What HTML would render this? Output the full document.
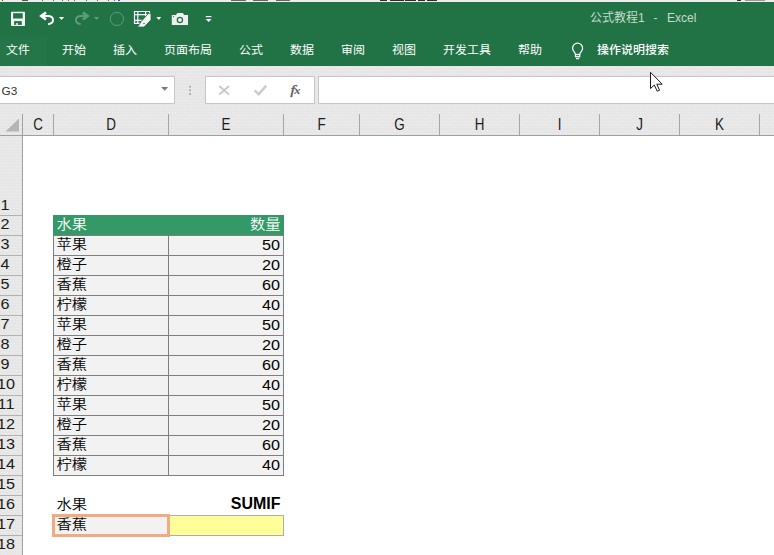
<!DOCTYPE html>
<html lang="zh-CN">
<head>
<meta charset="utf-8">
<title>公式教程1 - Excel</title>
<style>
*{margin:0;padding:0;box-sizing:border-box}
html,body{width:774px;height:555px;overflow:hidden;background:#fff}
body{position:relative;font-family:"Liberation Sans","Noto Sans CJK SC",sans-serif;color:#000}
.abs{position:absolute}
#topstrip{left:0;top:0;width:774px;height:1.6px;background:#eceeed}
#topstrip i{position:absolute;top:0;height:1.2px;background:#555}
#green{left:0;top:1.5px;width:774px;height:64.3px;background:#217346}
#title{top:9px;left:590px;width:120px;height:18px;line-height:18px;font-size:12px;color:#c5dccc;white-space:pre}
.tab{top:41px;height:18px;line-height:18px;font-size:12px;color:#fff;white-space:nowrap;transform:scaleY(.94);transform-origin:left bottom}
#fbar{left:0;top:65.5px;width:774px;height:70px;background:#e6e6e6}
#namebox{left:-2px;top:76px;width:177px;height:28px;background:#fff;border:1px solid #c6c6c6}
#namebox span{position:absolute;left:2.5px;top:5.9px;font-size:11.8px;line-height:16px;color:#333}
#btnbox{left:205px;top:76px;width:110px;height:28px;background:#fff;border:1px solid #c6c6c6}
#fbox{left:318px;top:76px;width:470px;height:28px;background:#fff;border:1px solid #c6c6c6}
.csep{top:114px;width:1px;height:21px;background:#a6a6a6}
.clab{top:113.5px;height:21px;line-height:22px;font-size:15.6px;text-align:center;color:#1a1a1a;transform:scaleX(.86)}
#hline{left:0;top:135px;width:774px;height:1px;background:#a0a0a0}
#rowhdr{left:0;top:136px;width:22px;height:419px;background:#e6e6e6}
#rline{left:22px;top:114px;width:1px;height:441px;background:#a0a0a0}
.rsep{left:0;width:22px;height:1px;background:#b2b2b2}
.rlab{left:-9.9px;margin-top:-.8px;width:30px;height:20px;line-height:20px;font-size:15px;transform:scaleX(1.08);text-align:center;color:#1a1a1a;white-space:nowrap}
.cell{height:21px;font-size:15px;line-height:17px;white-space:nowrap;font-weight:350}
.d{left:53px;width:116px;padding-left:2.7px;text-align:left}
.e{left:168px;width:116px;padding-right:3px;text-align:right}
.num{font-size:15.3px;font-weight:400;line-height:17.6px}
.num span{display:inline-block;transform:scaleX(1.06);transform-origin:right center}
.data{background:#f2f2f2;border:1px solid #7f7f7f}
.hd{background:#339966;color:#fff;border:1px solid #339966}
.cj{display:inline-block;transform:translate(-.5px,-.8px) scale(1.02,.91);transform-origin:left center}
.e .cj{transform:translate(.6px,-.8px) scale(1.02,.91);transform-origin:right center}
#ycell{left:169px;top:515px;width:115px;height:21px;background:#ffff99;border:1px solid #adadad}
#ocell{left:52px;top:514px;width:118px;height:23px;background:#f2f2f2;border:3px solid #f2aa7e;font-size:15px;font-weight:350;line-height:16.6px;padding-left:1.7px;white-space:nowrap}
</style>
</head>
<body>
<div class="abs" id="green"></div>
<div class="abs" style="left:0;top:36px;width:47px;height:29.8px;background:rgba(255,255,255,.016)"></div>
<div class="abs" id="topstrip"><i style="left:22px;width:6px;background:#555"></i><i style="left:231px;width:15px;background:#666"></i><i style="left:253px;width:15px;background:#666"></i><i style="left:276px;width:14px;background:#666"></i><i style="left:380px;width:7px;background:#2a2a2a"></i><i style="left:390px;width:14px;background:#2a2a2a"></i><i style="left:405px;width:11px;background:#2a2a2a"></i><i style="left:418px;width:7px;background:#2a2a2a"></i><i style="left:427px;width:10px;background:#2a2a2a"></i><i style="left:737px;width:4px;background:#333"></i><i style="left:745px;width:20px;background:#999"></i><i style="left:2px;width:1px;background:#444"></i><i style="left:42px;width:1px;background:#666"></i><i style="left:53px;width:1px;background:#666"></i><i style="left:62px;width:1px;background:#666"></i><i style="left:68px;width:1px;background:#666"></i><i style="left:74px;width:1px;background:#666"></i><i style="left:86px;width:1px;background:#666"></i><i style="left:97px;width:1px;background:#666"></i><i style="left:108px;width:1px;background:#666"></i><i style="left:114px;width:1px;background:#666"></i><i style="left:118px;width:2px;background:#36c"></i></div>
<div class="abs" id="title">公式教程1<span style="position:absolute;left:63.5px">-</span><span style="position:absolute;left:77px">Excel</span></div>

<div class="abs tab" style="left:6px">文件</div>
<div class="abs tab" style="left:62px">开始</div>
<div class="abs tab" style="left:113px">插入</div>
<div class="abs tab" style="left:164px">页面布局</div>
<div class="abs tab" style="left:239px">公式</div>
<div class="abs tab" style="left:290px">数据</div>
<div class="abs tab" style="left:341px">审阅</div>
<div class="abs tab" style="left:392px">视图</div>
<div class="abs tab" style="left:443px">开发工具</div>
<div class="abs tab" style="left:518px">帮助</div>
<div class="abs tab" style="left:597px;font-weight:500">操作说明搜索</div>

<div class="abs" id="fbar"></div>
<div class="abs" id="rowhdr"></div>
<svg class="abs" style="left:0;top:0" width="774" height="555"><defs><pattern id="dz" width="3" height="6" patternUnits="userSpaceOnUse"><rect x="2" y="1" width="1" height="1" fill="#f1f1f1"/><rect x="1" y="4" width="1" height="1" fill="#f1f1f1"/></pattern></defs><rect x="0" y="67" width="774" height="68" fill="url(#dz)"/><rect x="0" y="136" width="22" height="419" fill="url(#dz)"/></svg>
<div class="abs" id="namebox"><span>G3</span></div>
<div class="abs" id="btnbox"></div>
<div class="abs" id="fbox"></div>

<div class="abs" id="hline"></div>
<div class="abs" id="rline"></div>
<div class="abs csep" style="left:53px"></div>
<div class="abs csep" style="left:168px"></div>
<div class="abs csep" style="left:283px"></div>
<div class="abs csep" style="left:359px"></div>
<div class="abs csep" style="left:439px"></div>
<div class="abs csep" style="left:519px"></div>
<div class="abs csep" style="left:599px"></div>
<div class="abs csep" style="left:679px"></div>
<div class="abs csep" style="left:759px"></div>
<div class="abs clab" style="left:23px;width:30px">C</div>
<div class="abs clab" style="left:54px;width:114px">D</div>
<div class="abs clab" style="left:169px;width:114px">E</div>
<div class="abs clab" style="left:284px;width:75px">F</div>
<div class="abs clab" style="left:360px;width:79px">G</div>
<div class="abs clab" style="left:440px;width:79px">H</div>
<div class="abs clab" style="left:520px;width:79px">I</div>
<div class="abs clab" style="left:600px;width:79px">J</div>
<div class="abs clab" style="left:680px;width:79px">K</div>

<div class="abs rlab" style="top:195.4px">1</div>
<div class="abs rsep" style="top:215px"></div>
<div class="abs rlab" style="top:215px">2</div>
<div class="abs rsep" style="top:235px"></div>
<div class="abs rlab" style="top:235px">3</div>
<div class="abs rsep" style="top:255px"></div>
<div class="abs rlab" style="top:255px">4</div>
<div class="abs rsep" style="top:275px"></div>
<div class="abs rlab" style="top:275px">5</div>
<div class="abs rsep" style="top:295px"></div>
<div class="abs rlab" style="top:295px">6</div>
<div class="abs rsep" style="top:315px"></div>
<div class="abs rlab" style="top:315px">7</div>
<div class="abs rsep" style="top:335px"></div>
<div class="abs rlab" style="top:335px">8</div>
<div class="abs rsep" style="top:355px"></div>
<div class="abs rlab" style="top:355px">9</div>
<div class="abs rsep" style="top:375px"></div>
<div class="abs rlab" style="top:375px;margin-left:1px">10</div>
<div class="abs rsep" style="top:395px"></div>
<div class="abs rlab" style="top:395px;margin-left:1px">11</div>
<div class="abs rsep" style="top:415px"></div>
<div class="abs rlab" style="top:415px;margin-left:1px">12</div>
<div class="abs rsep" style="top:435px"></div>
<div class="abs rlab" style="top:435px;margin-left:1px">13</div>
<div class="abs rsep" style="top:455px"></div>
<div class="abs rlab" style="top:455px;margin-left:1px">14</div>
<div class="abs rsep" style="top:475px"></div>
<div class="abs rlab" style="top:475px;margin-left:1px">15</div>
<div class="abs rsep" style="top:495px"></div>
<div class="abs rlab" style="top:495px;margin-left:1px">16</div>
<div class="abs rsep" style="top:515px"></div>
<div class="abs rlab" style="top:515px;margin-left:1px">17</div>
<div class="abs rsep" style="top:535px"></div>
<div class="abs rlab" style="top:535px;margin-left:1px">18</div>

<div class="abs cell d hd" style="top:215px"><span class="cj">水果</span></div>
<div class="abs cell e hd" style="top:215px"><span class="cj">数量</span></div>
<div class="abs cell d data" style="top:235px"><span class="cj">苹果</span></div>
<div class="abs cell e data num" style="top:235px"><span>50</span></div>
<div class="abs cell d data" style="top:255px"><span class="cj">橙子</span></div>
<div class="abs cell e data num" style="top:255px"><span>20</span></div>
<div class="abs cell d data" style="top:275px"><span class="cj">香蕉</span></div>
<div class="abs cell e data num" style="top:275px"><span>60</span></div>
<div class="abs cell d data" style="top:295px"><span class="cj">柠檬</span></div>
<div class="abs cell e data num" style="top:295px"><span>40</span></div>
<div class="abs cell d data" style="top:315px"><span class="cj">苹果</span></div>
<div class="abs cell e data num" style="top:315px"><span>50</span></div>
<div class="abs cell d data" style="top:335px"><span class="cj">橙子</span></div>
<div class="abs cell e data num" style="top:335px"><span>20</span></div>
<div class="abs cell d data" style="top:355px"><span class="cj">香蕉</span></div>
<div class="abs cell e data num" style="top:355px"><span>60</span></div>
<div class="abs cell d data" style="top:375px"><span class="cj">柠檬</span></div>
<div class="abs cell e data num" style="top:375px"><span>40</span></div>
<div class="abs cell d data" style="top:395px"><span class="cj">苹果</span></div>
<div class="abs cell e data num" style="top:395px"><span>50</span></div>
<div class="abs cell d data" style="top:415px"><span class="cj">橙子</span></div>
<div class="abs cell e data num" style="top:415px"><span>20</span></div>
<div class="abs cell d data" style="top:435px"><span class="cj">香蕉</span></div>
<div class="abs cell e data num" style="top:435px"><span>60</span></div>
<div class="abs cell d data" style="top:455px"><span class="cj">柠檬</span></div>
<div class="abs cell e data num" style="top:455px"><span>40</span></div>
<div class="abs cell d" style="top:495px;border:1px solid transparent"><span class="cj">水果</span></div>
<div class="abs cell e" style="top:495px;font-weight:bold;font-size:15.6px;line-height:18px;padding-right:3.9px"><span style="display:inline-block;transform:scaleX(1.025);transform-origin:right center">SUMIF</span></div>
<div class="abs" id="ycell"></div>
<div class="abs" id="ocell"><span class="cj">香蕉</span></div>

<svg class="abs" style="left:0;top:0" width="774" height="140" viewBox="0 0 774 140">
<!-- save -->
<rect x="11" y="11.8" width="14" height="14.1" rx=".6" fill="#f6f6f6"/>
<rect x="13.1" y="13.2" width="9.6" height="5.3" fill="#217346"/>
<rect x="14.1" y="21.1" width="7.7" height="3.8" fill="#217346"/>
<rect x="16.2" y="23.1" width="1.7" height="1.8" fill="#f6f6f6"/>
<!-- undo -->
<g fill="none" stroke="#fff" stroke-linejoin="miter">
<path d="M46 12.4L41.2 16L46 19.6" stroke-width="2.5"/>
<path d="M42 16H47.6C51.2 16 53 18 53 20.1C53 22.6 51 23.8 48.2 24.2" stroke-width="1.9"/>
</g>
<path d="M58.9 17H64.1L61.5 20.1Z" fill="#fff"/>
<!-- redo (dim) -->
<g fill="none" stroke="#5d9d7a" stroke-linejoin="miter">
<path d="M82.9 12.4L87.7 16L82.9 19.6" stroke-width="2.5"/>
<path d="M86.9 16H81.3C77.7 16 75.9 18 75.9 20.1C75.9 22.6 77.9 23.8 80.7 24.2" stroke-width="1.9"/>
</g>
<path d="M93.8 17H99.2L96.5 20.1Z" fill="#5d9d7a"/>
<circle cx="116.9" cy="18.9" r="6.6" fill="none" stroke="#5d9d7a" stroke-width="1"/>
<!-- table w/ brush -->
<g fill="none" stroke="#fff" stroke-width="1.2">
<path d="M149.5 14V11.5H134.5V23.3H140"/>
<path d="M134.5 14.6H148.6 M134.5 20.4H142 M137.8 11.5V23.3 M145.6 11.5V16.5"/>
</g>
<path d="M148.6 13.2L151 13.4L151 19.8L145.6 25.6L144 27.1L137.4 27.1L141.2 21.4Z" fill="#f6f6f6" stroke="#217346" stroke-width=".9"/>
<circle cx="144" cy="23.4" r=".75" fill="#217346"/>
<path d="M156.4 17.1H161.2L158.8 19.9Z" fill="#fff"/>
<!-- camera -->
<path d="M171.8 15H176L177.4 13.1H182.8L184.2 15H188V25.1H171.8Z" fill="#efefef"/>
<circle cx="179.9" cy="20" r="2.6" fill="none" stroke="#217346" stroke-width="1.3"/>
<circle cx="173.5" cy="16.6" r=".6" fill="#217346"/>
<!-- customize -->
<rect x="205.8" y="16" width="5.6" height="1.2" fill="#fff"/>
<path d="M205.6 18.9H211.6L208.6 22.1Z" fill="#fff"/>
<!-- bulb -->
<g fill="none" stroke="#fff" stroke-width="1.25">
<path d="M575.5 54.4C575.3 52.4 572.6 51.4 572.6 48.2A5 5 0 0 1 582.6 48.2C582.6 51.4 579.9 52.4 579.7 54.4"/>
<rect x="575.5" y="54.5" width="4.2" height="2.2"/>
<path d="M576 58.6H579.2"/>
</g>
<!-- namebox dropdown -->
<path d="M161.2 87H168.2L164.7 90.8Z" fill="#777"/>
<!-- dots -->
<rect x="189.3" y="85.8" width="1.6" height="1.6" fill="#9a9a9a"/>
<rect x="189.3" y="89.5" width="1.6" height="1.6" fill="#9a9a9a"/>
<rect x="189.3" y="93.2" width="1.6" height="1.6" fill="#9a9a9a"/>
<!-- X -->
<path d="M219.2 86L229 94.6 M229 86L219.2 94.6" stroke="#c6c6c6" stroke-width="1.7" fill="none"/>
<!-- check -->
<path d="M254.6 90.4L258.7 94.2L266.2 85.6" stroke="#cbcbcb" stroke-width="2.4" fill="none"/>
<!-- fx -->
<text transform="translate(290.2,93.6) scale(1.3,1)" font-family="Liberation Serif, serif" font-style="italic" font-size="13.5" fill="#5a5a5a" stroke="#5a5a5a" stroke-width=".25">f<tspan font-size="9.5" dx="-.6" dy=".6" font-weight="bold" stroke="none">x</tspan></text>
<!-- select-all triangle -->
<path d="M19 118.5V131.5H5.5Z" fill="#b5b5b5"/>
<!-- cursor -->
<path d="M650.5 72.3V88.6L654.3 85L657.2 91.2L659.6 90.2L656.8 84.2H662.2Z" fill="#fff" stroke="#1a1a2a" stroke-width="1" stroke-linejoin="miter"/>
</svg>

</body>
</html>
